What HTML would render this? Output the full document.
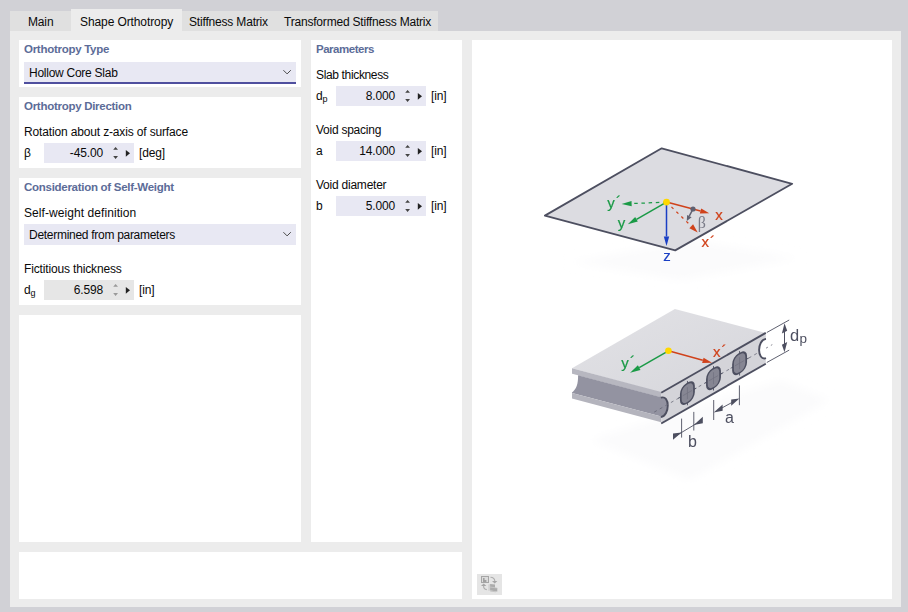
<!DOCTYPE html>
<html><head><meta charset="utf-8">
<style>
html,body{margin:0;padding:0}
body{width:908px;height:612px;overflow:hidden;background:#d1d1d6;position:relative;font-family:"Liberation Sans",sans-serif;font-size:12px;color:#0a0a0a}
.a{position:absolute}
.t{position:absolute;line-height:16px;white-space:nowrap;letter-spacing:-0.15px}
.h{position:absolute;line-height:16px;white-space:nowrap;font-weight:bold;font-size:11.5px;letter-spacing:-0.28px;color:#5c6c98}
.w{position:absolute;background:#fff}
.sp{position:absolute;width:90px;height:20px;background:#e8e8f3}
.sp.dis{background:#e6e6e6}
.sp .v{position:absolute;right:31px;top:2px;line-height:16px;letter-spacing:-0.15px}
.sp svg{position:absolute;left:0;top:0}
.cb{position:absolute;background:#e8e8f3}
sub{font-size:9px;vertical-align:baseline;position:relative;top:2px;letter-spacing:0}
</style></head><body>
<!-- tabs -->
<div class="a" style="left:10px;top:11px;width:428px;height:21px;background:#e0e0e0"></div>
<div class="a" style="left:10px;top:31px;width:891px;height:576px;background:#ececec"></div>
<div class="a" style="left:71px;top:9px;width:111px;height:24px;background:#ececec"></div>
<div class="t" style="left:28px;top:14px">Main</div>
<div class="t" style="left:80px;top:14px;letter-spacing:-0.1px">Shape Orthotropy</div>
<div class="t" style="left:189px;top:14px;letter-spacing:-0.18px">Stiffness Matrix</div>
<div class="t" style="left:284px;top:14px;letter-spacing:-0.2px">Transformed Stiffness Matrix</div>

<!-- left column -->
<div class="w" style="left:19px;top:40px;width:282px;height:47px"></div>
<div class="h" style="left:24px;top:41px">Orthotropy Type</div>
<div class="cb" style="left:24px;top:62px;width:272px;height:22px;box-shadow:inset 0 -2px 0 #4f4f9e"></div>
<div class="t" style="left:29px;top:65px;letter-spacing:-0.26px">Hollow Core Slab</div>
<svg class="a" style="left:281px;top:67px" width="12" height="10"><path d="M2.4 3.2 L6.1 6.9 L9.8 3.2" fill="none" stroke="#4a4a4a" stroke-width="1"/></svg>

<div class="w" style="left:19px;top:97px;width:282px;height:71px"></div>
<div class="h" style="left:24px;top:98px">Orthotropy Direction</div>
<div class="t" style="left:24px;top:124px">Rotation about z-axis of surface</div>
<div class="t" style="left:24px;top:145px">β</div>
<div class="sp" style="left:44px;top:143px"><span class="v">-45.00</span>
<svg width="90" height="20"><path d="M69.2 6.8 L71.6 3.9 L74 6.8Z M69.2 13.1 L71.6 16 L74 13.1Z" fill="#444"/><path d="M81.8 6.9 L86 10.3 L81.8 13.7Z" fill="#222"/></svg></div>
<div class="t" style="left:139px;top:145px">[deg]</div>

<div class="w" style="left:19px;top:178px;width:282px;height:127px"></div>
<div class="h" style="left:24px;top:179px">Consideration of Self-Weight</div>
<div class="t" style="left:24px;top:205px;letter-spacing:0.07px">Self-weight definition</div>
<div class="cb" style="left:24px;top:224px;width:272px;height:21px"></div>
<div class="t" style="left:29px;top:227px;letter-spacing:-0.285px">Determined from parameters</div>
<svg class="a" style="left:281px;top:229px" width="12" height="10"><path d="M2.4 3.2 L6.1 6.9 L9.8 3.2" fill="none" stroke="#4a4a4a" stroke-width="1"/></svg>
<div class="t" style="left:24px;top:261px">Fictitious thickness</div>
<div class="t" style="left:24px;top:282px">d<sub>g</sub></div>
<div class="sp dis" style="left:44px;top:280px"><span class="v">6.598</span>
<svg width="90" height="20"><path d="M69.2 6.8 L71.6 3.9 L74 6.8Z M69.2 13.1 L71.6 16 L74 13.1Z" fill="#999"/><path d="M81.8 6.9 L86 10.3 L81.8 13.7Z" fill="#222"/></svg></div>
<div class="t" style="left:139px;top:282px">[in]</div>

<div class="w" style="left:19px;top:315px;width:282px;height:227px"></div>
<div class="w" style="left:19px;top:552px;width:443px;height:47px"></div>

<!-- parameters -->
<div class="w" style="left:311px;top:40px;width:151px;height:502px"></div>
<div class="h" style="left:316px;top:41px;letter-spacing:-0.48px">Parameters</div>
<div class="t" style="left:316px;top:67px;letter-spacing:-0.35px">Slab thickness</div>
<div class="t" style="left:316px;top:88px">d<sub>p</sub></div>
<div class="sp" style="left:336px;top:86px"><span class="v">8.000</span>
<svg width="90" height="20"><path d="M69.2 6.8 L71.6 3.9 L74 6.8Z M69.2 13.1 L71.6 16 L74 13.1Z" fill="#444"/><path d="M81.8 6.9 L86 10.3 L81.8 13.7Z" fill="#222"/></svg></div>
<div class="t" style="left:431px;top:88px">[in]</div>
<div class="t" style="left:316px;top:122px;letter-spacing:-0.25px">Void spacing</div>
<div class="t" style="left:316px;top:143px">a</div>
<div class="sp" style="left:336px;top:141px"><span class="v">14.000</span>
<svg width="90" height="20"><path d="M69.2 6.8 L71.6 3.9 L74 6.8Z M69.2 13.1 L71.6 16 L74 13.1Z" fill="#444"/><path d="M81.8 6.9 L86 10.3 L81.8 13.7Z" fill="#222"/></svg></div>
<div class="t" style="left:431px;top:143px">[in]</div>
<div class="t" style="left:316px;top:177px;letter-spacing:-0.23px">Void diameter</div>
<div class="t" style="left:316px;top:198px">b</div>
<div class="sp" style="left:336px;top:196px"><span class="v">5.000</span>
<svg width="90" height="20"><path d="M69.2 6.8 L71.6 3.9 L74 6.8Z M69.2 13.1 L71.6 16 L74 13.1Z" fill="#444"/><path d="M81.8 6.9 L86 10.3 L81.8 13.7Z" fill="#222"/></svg></div>
<div class="t" style="left:431px;top:198px">[in]</div>

<!-- image panel -->
<div class="w" style="left:472px;top:40px;width:420px;height:559px"></div>
<svg class="a" id="img" style="left:472px;top:40px;will-change:transform" width="420" height="559" viewBox="472 40 420 559">
<defs><filter id="bl" x="-20%" y="-50%" width="140%" height="200%"><feGaussianBlur stdDeviation="5"/></filter><linearGradient id="gtop" x1="0" y1="0" x2="1" y2="1"><stop offset="0" stop-color="#e2e2e6"/><stop offset="1" stop-color="#d6d6db"/></linearGradient><linearGradient id="ggr" gradientUnits="userSpaceOnUse" x1="572" y1="375" x2="567.5" y2="392.5"><stop offset="0" stop-color="#858591"/><stop offset="0.68" stop-color="#8d8d99"/><stop offset="0.82" stop-color="#9d9da8"/><stop offset="1" stop-color="#a3a3ad"/></linearGradient></defs>
<polygon points="570,262 680,280 800,258 690,240" fill="#fbfbfc" filter="url(#bl)"/>
<polygon points="661.7,148.3 792.2,183.8 675.2,250.4 544.9,215.6" fill="#dcdce1" stroke="#4d4f60" stroke-width="1.8" stroke-linejoin="round"/>
<line x1="666.5" y1="202.1" x2="631.6" y2="203.6" stroke="#1a9a46" stroke-width="1.25" stroke-dasharray="3.5 3.7"/>
<polygon points="621.6,204.0 631.5,201.0 631.7,206.2" fill="#1a9a46"/>
<line x1="666.5" y1="202.1" x2="636.5" y2="219.3" stroke="#1a9a46" stroke-width="1.5"/>
<polygon points="627.8,224.3 635.2,217.1 637.8,221.6" fill="#1a9a46"/>
<line x1="666.5" y1="202.1" x2="666.5" y2="236.5" stroke="#1a3fc4" stroke-width="1.5"/>
<polygon points="666.5,246.0 663.8,236.5 669.2,236.5" fill="#1a3fc4"/>
<line x1="666.5" y1="202.1" x2="691.3" y2="226.2" stroke="#d0421b" stroke-width="1.25" stroke-dasharray="2.8 4.1"/>
<polygon points="697.7,232.5 689.4,228.2 693.1,224.3" fill="#d0421b"/>
<line x1="666.5" y1="202.1" x2="700.5" y2="211.0" stroke="#d0421b" stroke-width="1.5"/>
<polygon points="709.2,213.3 699.8,213.5 701.2,208.5" fill="#d0421b"/>
<line x1="693.0" y1="209.0" x2="689.3" y2="216.0" stroke="#5f6070" stroke-width="1.6"/>
<polygon points="686.8,220.9 687.1,214.9 691.6,217.2" fill="#5f6070"/>
<circle cx="693" cy="209" r="2.6" fill="#5f6070"/>
<circle cx="666.5" cy="202.1" r="3.4" fill="#ffd800"/>
<text x="607.3" y="207.5" fill="#1a9a46" font-size="15" font-family="'Liberation Sans',sans-serif" stroke="#1a9a46" stroke-width="0.18">y<tspan dx="1.2" dy="0.4" font-size="16">´</tspan></text>
<text x="617.8" y="227.9" fill="#1a9a46" font-size="15" font-family="'Liberation Sans',sans-serif" stroke="#1a9a46" stroke-width="0.18">y</text>
<text x="663.2" y="260.9" fill="#1a3fc4" font-size="15" font-family="'Liberation Sans',sans-serif" stroke="#1a3fc4" stroke-width="0.18">z</text>
<text x="715.2" y="220.4" fill="#d0421b" font-size="15" font-family="'Liberation Sans',sans-serif" stroke="#d0421b" stroke-width="0.18">x</text>
<text x="701.5" y="247.3" fill="#d0421b" font-size="15" font-family="'Liberation Sans',sans-serif" stroke="#d0421b" stroke-width="0.18">x<tspan dx="1" dy="0.4" font-size="16">´</tspan></text>
<text x="697.8" y="227.8" fill="#7a7b88" font-size="16" font-family="'Liberation Serif',serif">β</text>
<polygon points="590,440 690,480 830,400 780,380" fill="#fbfbfc" filter="url(#bl)"/>
<polygon points="674.9,309.0 765.8,332.9 661.2,392.7 572.0,368.3" fill="url(#gtop)"/>
<polygon points="572.0,368.3 661.2,391.9 661.2,397.6 572.0,374.0" fill="#b7b7c0"/>
<polygon points="572.0,373.7 661.2,397.2 661.2,416.5 572.0,392.9" fill="#9393a1"/>
<path d="M571.4,373.5 L578.1,375.2 C578.1,384.2 576.6,388.7 571.4,393.1Z" fill="#fff"/>
<polygon points="572.0,392.9 661.2,416.5 661.2,422.2 572.0,398.6" fill="#b4b4bd"/>
<polygon points="661.2,392.7 765.8,332.9 765.8,363.7 661.2,423.5" fill="#d4d4d9"/>
<path d="M660.8000000000001,397.7 C670.1,394.5 670.1,415.5 660.8000000000001,417.1Z" fill="#9393a1"/>
<path d="M660.8000000000001,397.7 C670.1,394.5 670.1,415.5 660.8000000000001,417.1" fill="none" stroke="#4d4f60" stroke-width="1.9"/>
<line x1="654.2" y1="412.1" x2="772.3" y2="344.6" stroke="#626372" stroke-width="0.75" stroke-dasharray="3 3.4"/>
<g transform="translate(687.4,393.1) skewY(-29.76)"><line x1="0" y1="-12.2" x2="0" y2="12.2" stroke="#4d4f60" stroke-width="0.9"/><line x1="-9" y1="0" x2="9" y2="0" stroke="#4d4f60" stroke-width="0.9"/><rect x="-6.6" y="-9.6" width="13.2" height="19.2" rx="5.6" ry="6.4" fill="#868693" stroke="#4d4f60" stroke-width="1.7"/><line x1="0" y1="-6" x2="0" y2="6" stroke="#717180" stroke-width="0.6"/><line x1="-4.6" y1="0" x2="4.6" y2="0" stroke="#717180" stroke-width="0.6"/></g>
<g transform="translate(713.5,378.2) skewY(-29.76)"><line x1="0" y1="-12.2" x2="0" y2="12.2" stroke="#4d4f60" stroke-width="0.9"/><line x1="-9" y1="0" x2="9" y2="0" stroke="#4d4f60" stroke-width="0.9"/><rect x="-6.6" y="-9.6" width="13.2" height="19.2" rx="5.6" ry="6.4" fill="#868693" stroke="#4d4f60" stroke-width="1.7"/><line x1="0" y1="-6" x2="0" y2="6" stroke="#717180" stroke-width="0.6"/><line x1="-4.6" y1="0" x2="4.6" y2="0" stroke="#717180" stroke-width="0.6"/></g>
<g transform="translate(739.6,363.2) skewY(-29.76)"><line x1="0" y1="-12.2" x2="0" y2="12.2" stroke="#4d4f60" stroke-width="0.9"/><line x1="-9" y1="0" x2="9" y2="0" stroke="#4d4f60" stroke-width="0.9"/><rect x="-6.6" y="-9.6" width="13.2" height="19.2" rx="5.6" ry="6.4" fill="#868693" stroke="#4d4f60" stroke-width="1.7"/><line x1="0" y1="-6" x2="0" y2="6" stroke="#717180" stroke-width="0.6"/><line x1="-4.6" y1="0" x2="4.6" y2="0" stroke="#717180" stroke-width="0.6"/></g>
<path d="M766.0,338.9 C756.8,339.9 756.8,361.1 766.0,358.2" fill="#fff" stroke="#4d4f60" stroke-width="1.9"/>
<line x1="661.2" y1="392.7" x2="765.8" y2="332.9" stroke="#4d4f60" stroke-width="1.9"/>
<line x1="661.2" y1="423.5" x2="765.8" y2="363.7" stroke="#4d4f60" stroke-width="1.9"/>
<line x1="668.4" y1="350.8" x2="702.8" y2="360.3" stroke="#d0421b" stroke-width="1.5"/>
<polygon points="712.0,362.8 702.1,362.9 703.6,357.7" fill="#d0421b"/>
<line x1="668.4" y1="350.8" x2="639.2" y2="367.6" stroke="#1a9a46" stroke-width="1.5"/>
<polygon points="630.1,372.8 637.9,365.2 640.5,369.9" fill="#1a9a46"/>
<circle cx="668.4" cy="350.8" r="3.3" fill="#ffd800"/>
<text x="713.0" y="356.8" fill="#d0421b" font-size="15" font-family="'Liberation Sans',sans-serif" stroke="#d0421b" stroke-width="0.18">x<tspan dx="1" dy="0.4" font-size="16">´</tspan></text>
<text x="621.3" y="367.5" fill="#1a9a46" font-size="15" font-family="'Liberation Sans',sans-serif" stroke="#1a9a46" stroke-width="0.18">y<tspan dx="1.2" dy="0.4" font-size="16">´</tspan></text>
<line x1="766.8" y1="332.5" x2="789.2" y2="320.0" stroke="#4d4f60" stroke-width="0.9"/>
<line x1="766.8" y1="362.5" x2="789.2" y2="350.1" stroke="#4d4f60" stroke-width="0.9"/>
<line x1="784.5" y1="330.0" x2="784.5" y2="345.0" stroke="#4d4f60" stroke-width="1.0"/>
<polygon points="784.5,323.2 781.9,333.5 787.2,330.7" fill="#4d4f60"/>
<polygon points="784.5,352.2 781.9,344.7 787.2,341.9" fill="#4d4f60"/>
<text x="789.9" y="340.8" fill="#4d4f60" font-size="16.5" font-family="'Liberation Sans',sans-serif">d</text>
<text x="799.5" y="343.4" fill="#4d4f60" font-size="13.5" font-family="'Liberation Sans',sans-serif">p</text>
<line x1="713.7" y1="400.0" x2="713.7" y2="420.0" stroke="#4d4f60" stroke-width="0.9"/>
<line x1="739.4" y1="385.4" x2="739.4" y2="405.2" stroke="#4d4f60" stroke-width="0.9"/>
<line x1="718.0" y1="410.1" x2="735.0" y2="400.8" stroke="#4d4f60" stroke-width="0.9"/>
<polygon points="713.7,412.5 722.6,404.5 722.6,410.7" fill="#4d4f60"/>
<polygon points="739.4,398.4 731.2,399.6 731.2,405.8" fill="#4d4f60"/>
<text x="724.9" y="422.9" fill="#4d4f60" font-size="16" font-family="'Liberation Sans',sans-serif">a</text>
<line x1="681.6" y1="418.6" x2="681.6" y2="437.6" stroke="#4d4f60" stroke-width="0.9"/>
<line x1="693.8" y1="411.9" x2="693.8" y2="430.5" stroke="#4d4f60" stroke-width="0.9"/>
<line x1="677.0" y1="435.2" x2="699.0" y2="422.0" stroke="#4d4f60" stroke-width="0.9"/>
<polygon points="681.6,432.4 673.0,433.4 673.0,439.8" fill="#4d4f60"/>
<polygon points="693.8,424.9 702.8,416.7 702.8,423.3" fill="#4d4f60"/>
<text x="687.9" y="447.3" fill="#4d4f60" font-size="16" font-family="'Liberation Sans',sans-serif">b</text>
</svg>
<div class="a" style="left:477px;top:574px;width:25px;height:21px;background:#e5e5e5"></div>
<svg class="a" style="left:477px;top:574px" width="25" height="21" viewBox="477 574 25 21">
<rect x="481.5" y="576.5" width="7" height="6" fill="#dcdcdc" stroke="#a6a6a6" stroke-width="1"/>
<path d="M483 582V578h1.6v2h1.8v2z" fill="#a0a0a0"/>
<path d="M490.5 577.2 Q494.6 577.4 494.8 581" fill="none" stroke="#adadad" stroke-width="1.1"/>
<path d="M492 581h5.4l-2.7 2.6z" fill="#a6a6a6"/>
<path d="M486.8 589.6 Q483.6 589.4 483.6 586" fill="none" stroke="#adadad" stroke-width="1.1"/>
<path d="M481 586h5.4l-2.7 -2.6z" fill="#a6a6a6"/>
<path d="M488.3 584.4l1.8 -.5v6.6l-1.8 .6z" fill="#d2d2d2"/>
<path d="M490.1 583.9l4.9 .6v3.2l2.3 .3v3.4l-7.2 -.9z" fill="#ababab"/>
<path d="M490.1 587.1l4.9 .6l2.3 .3" fill="none" stroke="#cfcfcf" stroke-width="0.7"/>
<path d="M490.1 590.5l7.2 .9l-1.8 .9l-5.4 -.7z" fill="#c4c4c4"/>
</svg>
</body></html>
